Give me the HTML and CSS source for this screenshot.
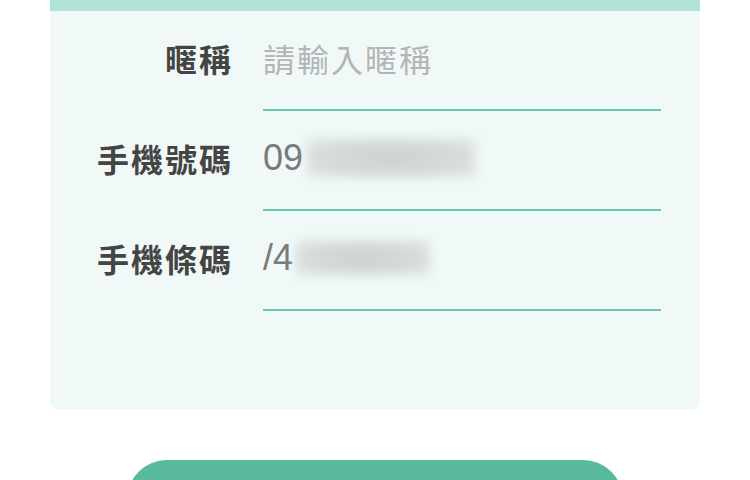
FILE: index.html
```html
<!DOCTYPE html>
<html lang="zh-Hant">
<head>
<meta charset="utf-8">
<link rel="stylesheet" href="styles.css">
</head>
<body>
<div class="page">
  <div class="card">
    <div class="card-band"></div>
    <div class="form">
      <div class="row">
        <div class="label">暱稱</div>
        <div class="field"><span class="placeholder">請輸入暱稱</span></div>
      </div>
      <div class="row">
        <div class="label">手機號碼</div>
        <div class="field"><span class="value">09</span><span class="masked masked-phone"></span></div>
      </div>
      <div class="row">
        <div class="label">手機條碼</div>
        <div class="field"><span class="value">/4</span><span class="masked masked-code"></span></div>
      </div>
    </div>
  </div>
  <div class="actions">
    <button class="submit" type="button"></button>
  </div>
</div>
</body>
</html>
```

FILE: styles.css
```css
html, body {
  margin: 0;
  padding: 0;
  background: #ffffff;
  font-family: "Noto Sans CJK TC", "Noto Sans", sans-serif;
}

.page {
  height: 480px;
  overflow: hidden;
}

.card {
  margin: 0 50px;
  background: #f0f9f8;
  border-radius: 0 0 9px 9px;
  overflow: hidden;
}

.card-band {
  height: 11px;
  background: #b0e2d7;
}

.form {
  padding: 0 39px 99px 0;
}

.row {
  display: flex;
  align-items: stretch;
  height: 100px;
}

.label {
  width: 183px;
  flex: none;
  display: flex;
  align-items: center;
  justify-content: flex-end;
  font-size: 32px;
  font-weight: 700;
  color: #444444;
  letter-spacing: 2px;
  margin-right: 30px;
  padding-bottom: 6px;
  box-sizing: border-box;
}

.field {
  flex: 1;
  display: flex;
  align-items: center;
  border-bottom: 2px solid #6cc6ad;
  padding-bottom: 4px;
}

.placeholder {
  font-size: 32px;
  color: #b3b5b5;
  letter-spacing: 2px;
}

.value {
  font-family: "Liberation Sans", "Noto Sans", sans-serif;
  font-size: 36px;
  color: #7a7a7a;
}

.masked {
  display: inline-block;
  background: radial-gradient(ellipse at center, #ccd2d0 0%, #d6dcda 60%, #e4eae8 100%);
  filter: blur(5px);
  border-radius: 4px;
}

.masked-phone {
  width: 168px;
  height: 40px;
  margin-left: 4px;
}

.masked-code {
  width: 134px;
  height: 36px;
  margin-left: 3px;
}

.actions {
  display: flex;
  justify-content: center;
  padding-top: 50px;
}

.submit {
  width: 496px;
  height: 80px;
  border: none;
  border-radius: 40px;
  background: #58b99d;
}
```
